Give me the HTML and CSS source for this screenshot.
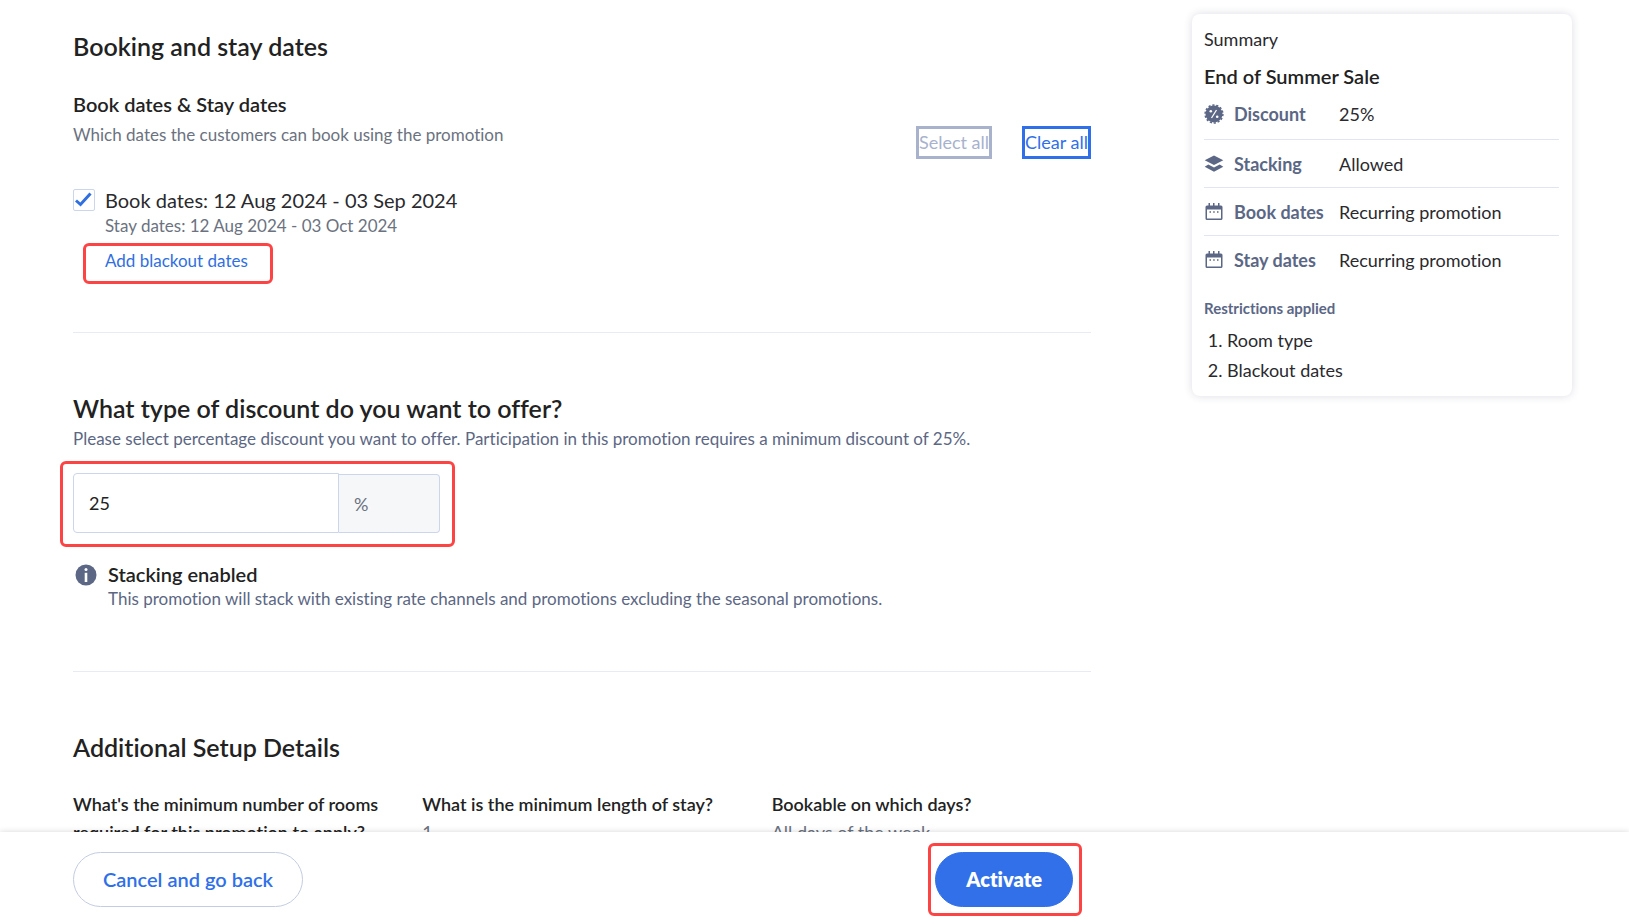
FILE: index.html
```html
<!DOCTYPE html>
<html lang="en">
<head>
<meta charset="utf-8">
<title>Create promotion</title>
<link rel="stylesheet" href="styles.css">
</head>
<body>
<svg class="sprite" aria-hidden="true">
  <symbol id="calendar" viewBox="0 0 20 20">
    <path fill-rule="evenodd" d="M4.500 1h1.500v2.500h3V1h1.500v2.500h3.500V1h1.500v2.500H17a1.500 1.500 0 0 1 1.500 1.500v11.500A1.500 1.500 0 0 1 17 18H3a1.500 1.500 0 0 1-1.500-1.500V5A1.500 1.500 0 0 1 3 3.500h1.500zM3 7.500v9h14v-9z"/>
    <path d="M5.500 9.200h1.500v1.500H5.500zM9.200 9.200h1.500v1.500H9.200zM13 9.200h1.500v1.500H13z"/>
  </symbol>
</svg>
<div class="app">
  <div class="page">
    <main class="content">
      <section class="section">
        <h2>Booking and stay dates</h2>
        <div class="dates-head">
          <div>
            <h3>Book dates &amp; Stay dates</h3>
            <p class="muted">Which dates the customers can book using the promotion</p>
          </div>
          <div class="bulk">
            <button class="bulk-btn" type="button" disabled>Select all</button>
            <button class="bulk-btn" type="button">Clear all</button>
          </div>
        </div>
        <div class="date-option">
          <span class="check">
            <input type="checkbox" id="range" checked>
            <svg viewBox="0 0 22 22" aria-hidden="true"><path d="M3 11.500l4.500 4L17.500 4.500"/></svg>
          </span>
          <div>
            <label class="range-label" for="range">Book dates: 12 Aug 2024 - 03 Sep 2024</label>
            <p class="stay muted">Stay dates: 12 Aug 2024 - 03 Oct 2024</p>
            <a class="blackout marked" href="#blackout">Add blackout dates</a>
          </div>
        </div>
      </section>

      <section class="section discount">
        <h2><label for="discount">What type of discount do you want to offer?</label></h2>
        <p class="note">Please select percentage discount you want to offer. Participation in this promotion requires a minimum discount of 25%.</p>
        <div class="percent marked">
          <input type="text" id="discount" value="25" inputmode="numeric">
          <span class="unit">%</span>
        </div>
        <div class="stacking">
          <svg viewBox="0 0 22 22" aria-hidden="true"><circle class="disc" cx="11" cy="11" r="10.500"/><circle cx="11" cy="5.500" r="1.500"/><path d="M9.700 8.800h2.600V18H9.700z"/></svg>
          <div>
            <h3>Stacking enabled</h3>
            <p class="note">This promotion will stack with existing rate channels and promotions excluding the seasonal promotions.</p>
          </div>
        </div>
      </section>

      <section class="section setup">
        <h2>Additional Setup Details</h2>
        <dl class="details">
          <div><dt>What's the minimum number of rooms required for this promotion to apply?</dt><dd>1</dd></div>
          <div><dt>What is the minimum length of stay?</dt><dd>1</dd></div>
          <div><dt>Bookable on which days?</dt><dd>All days of the week</dd></div>
        </dl>
      </section>
    </main>

    <aside class="summary">
      <p class="summary-title">Summary</p>
      <h3>End of Summer Sale</h3>
      <dl class="facts">
        <div>
          <dt><svg viewBox="0 0 20 20" aria-hidden="true"><circle cx="10" cy="10" r="8.500"/><circle class="teeth" cx="10" cy="10" r="8.900"/><path class="cut" d="M7.500 14L12.500 6"/><circle class="hole" cx="6.800" cy="7.300" r="1.300"/><circle class="hole" cx="13.200" cy="12.700" r="1.300"/></svg>Discount</dt>
          <dd>25%</dd>
        </div>
        <div>
          <dt><svg viewBox="0 0 20 20" aria-hidden="true"><path d="M10 1.500l9.300 4.800-9.300 4.700-9.300-4.700zM4.300 10.600L10 13.400l5.700-2.800 3.600 2.100-9.300 5-9.300-5z"/></svg>Stacking</dt>
          <dd>Allowed</dd>
        </div>
        <div>
          <dt><svg aria-hidden="true"><use href="#calendar"/></svg>Book dates</dt>
          <dd>Recurring promotion</dd>
        </div>
        <div>
          <dt><svg aria-hidden="true"><use href="#calendar"/></svg>Stay dates</dt>
          <dd>Recurring promotion</dd>
        </div>
      </dl>
      <h4>Restrictions applied</h4>
      <ol>
        <li>Room type</li>
        <li>Blackout dates</li>
      </ol>
    </aside>
  </div>

  <footer class="actions">
    <div class="actions-row">
      <button class="btn" type="button">Cancel and go back</button>
      <button class="btn primary marked" type="button">Activate</button>
    </div>
  </footer>
</div>
</body>
</html>
```
FILE: styles.css
```css
* { box-sizing: border-box; }
body, h2, h3, h4, p, dl, dd, ol { margin: 0; }
body {
  font: 18px/24px Lato, "Open Sans", sans-serif;
  font-variant-ligatures: none;
  color: #2a2a2e;
  background: #fff;
}
button, input { font: inherit; }
.sprite { position: absolute; width: 0; height: 0; }

.app { display: flex; flex-direction: column; height: 100vh; }
.page, .actions {
  display: grid;
  grid-template-columns: minmax(0, 1fr) 380px;
  column-gap: 101px;
  padding: 0 57px 0 73px;
}
.page { flex: 1; min-height: 0; align-items: start; overflow: auto; scrollbar-width: none; }

.section { padding: 59px 0; border-bottom: 1px solid #e8eaf4; }
.section:first-child { padding-top: 30px; }
.section:last-child { border: 0; }
h2 { font-size: 25px; line-height: 32px; font-weight: 600; color: #222; }
h3 { font-size: 20px; line-height: 24px; font-weight: 600; color: #222; }
.muted { font-size: 17px; line-height: 26px; color: #6b7280; }
.note { font-size: 17px; line-height: 26px; color: #5c6784; }

.dates-head { display: flex; justify-content: space-between; margin-top: 30px; }
.dates-head .muted { margin-top: 6px; }
.bulk { display: flex; gap: 30px; align-self: flex-end; margin-bottom: -11px; }
.bulk-btn {
  height: 33px;
  padding: 0 0 2px;
  border: 3px solid #2f6fe9;
  background: #fff;
  color: #2f6fe9;
}
.bulk-btn:disabled { border-color: #a8b2cd; color: #a8b2cd; }

.date-option { display: flex; gap: 10px; margin-top: 41px; }
.check { position: relative; width: 22px; height: 22px; }
.check input {
  appearance: none;
  display: block;
  width: 22px;
  height: 22px;
  margin: 0;
  border: 1px solid #cbd6ec;
  border-radius: 2px;
}
.check svg { position: absolute; inset: 0; fill: none; stroke: none; pointer-events: none; }
.check input:checked + svg { stroke: #2f6fe0; stroke-width: 3; }
.range-label { display: block; font-size: 20px; line-height: 22px; }
.stay { margin-top: 2px; }
.blackout { display: inline-block; margin-top: 10px; font-size: 17px; color: #2f6fe0; text-decoration: none; }

/* Red callout frames around the steps of the guide */
.marked { position: relative; }
.marked::after {
  content: "";
  position: absolute;
  inset: -12px;
  border: 3px solid #fc4444;
  border-radius: 6px;
  pointer-events: none;
}
.blackout.marked::after { inset: -6px -25px -11px -22px; }
.percent.marked::after { inset: -12px -15px -14px -13px; }
.primary.marked::after { inset: -10px -10px -10px -8px; }

.discount > .note { margin-top: 2px; }
.percent { display: flex; align-items: flex-end; width: 367px; margin-top: 21px; }
.percent input {
  flex: 1;
  min-width: 0;
  height: 60px;
  padding: 0 15px;
  border: 1px solid #cbd6ec;
  border-radius: 4px 0 0 4px;
  color: #222;
}
.unit {
  width: 101px;
  height: 59px;
  padding: 0 15px;
  line-height: 58px;
  border: solid #cbd6ec;
  border-width: 1px 1px 1px 0;
  border-radius: 0 4px 4px 0;
  background: #f6f7f9;
  color: #6b7280;
}
.stacking { display: flex; gap: 11px; margin-top: 29px; padding-left: 2px; }
.stacking svg { width: 22px; height: 22px; margin-top: 2px; fill: #fff; }
.stacking .disc { fill: #5b6785; }

.details { display: grid; grid-template-columns: repeat(3, 1fr); column-gap: 30px; margin-top: 27px; }
dt { font-weight: 600; }
.details dt { color: #222; line-height: 28px; }
.details dd { color: #6b7280; line-height: 28px; }

.summary {
  margin-top: 14px;
  padding: 13px 13px 11px 12px;
  border-radius: 8px;
  box-shadow: 0 0 8px rgba(40, 44, 90, .16);
}
.summary h3 { margin-top: 13px; }
.facts { margin-top: 2px; }
.facts > div { display: flex; padding: 12px 0 11px; border-bottom: 1px solid #dfe5f5; }
.facts > div:first-child { padding-bottom: 13px; }
.facts > div:last-child { border: 0; }
.facts dt { display: flex; align-items: center; gap: 10px; width: 135px; font-weight: 700; color: #5b6785; }
.facts svg { width: 20px; height: 20px; fill: #5b6785; }
.facts .teeth { fill: none; stroke: #5b6785; stroke-width: 1.500; stroke-dasharray: 2.200 1.794; }
.cut { stroke: #fff; stroke-width: 1.300; }
.facts .hole { fill: #fff; }
.summary h4 { margin-top: 13px; font-size: 15px; line-height: 24px; font-weight: 700; color: #5b6785; }
.summary ol { margin-top: 5px; padding-left: 23px; line-height: 30px; }

.actions { position: relative; height: 92px; padding-top: 20px; background: #fff; box-shadow: 0 0 6px rgba(0, 0, 0, .16); }
.actions-row { display: flex; justify-content: space-between; align-items: flex-start; padding-right: 18px; }
.btn {
  height: 55px;
  padding: 0 29px 1px;
  border: 1px solid #c3cce2;
  border-radius: 28px;
  background: #fff;
  color: #2f6fe9;
  font-size: 20px;
  font-weight: 600;
}
.primary { padding: 0 30px 1px; border-color: #3170e8; background: #3170e8; color: #fff; font-weight: 800; }
```
